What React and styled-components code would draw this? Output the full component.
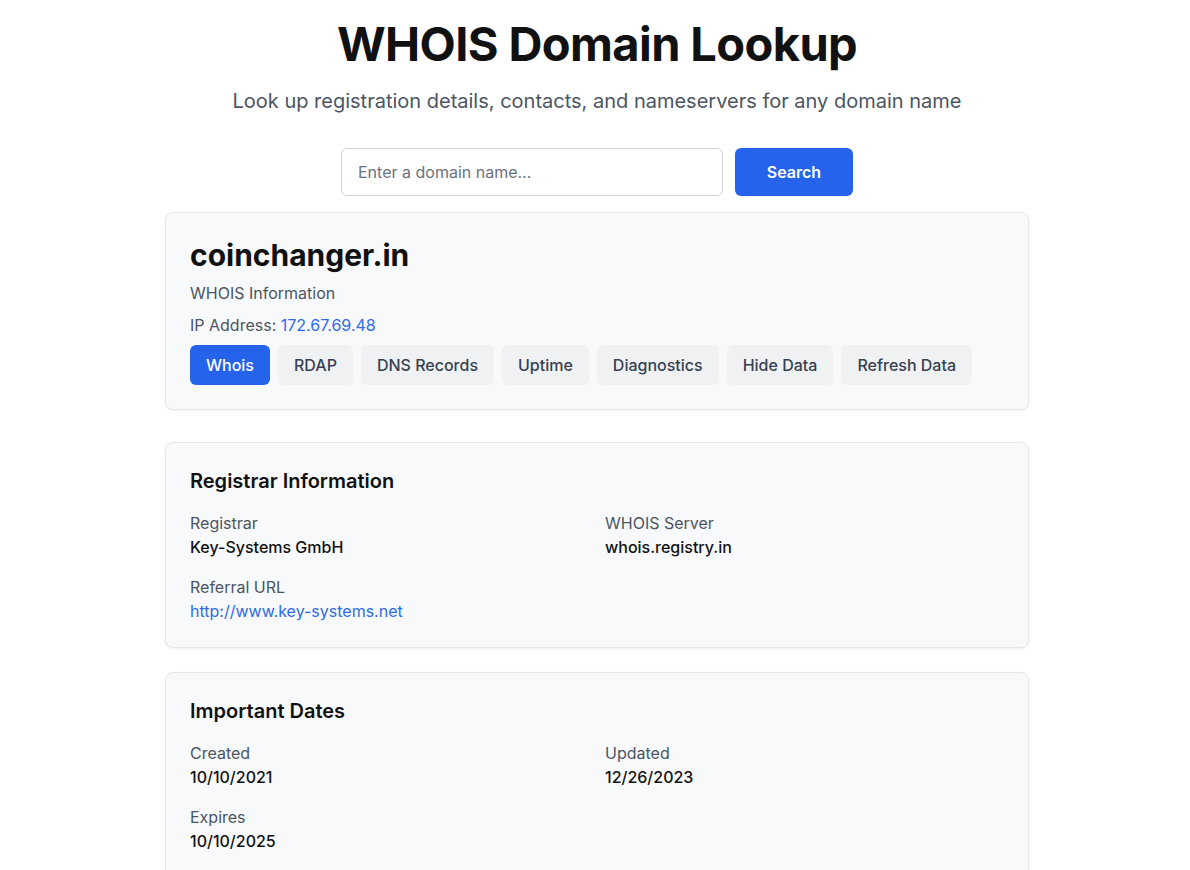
import React from 'react';
import styled, { createGlobalStyle } from 'styled-components';

const GlobalStyle = createGlobalStyle`
  body {
    margin: 0;
    background: #ffffff;
    font-family: Inter, 'Noto Sans', sans-serif;
    color: #111827;
  }
`;

const Page = styled.div`
  padding: 15px 0 40px 4px;
`;

const Container = styled.div`
  max-width: 864px;
  margin: 0 auto;
`;

const Title = styled.h1`
  margin: 0;
  font-size: 47px;
  line-height: 58px;
  font-weight: 700;
  text-align: center;
  color: #111111;
  letter-spacing: -0.6px;
`;

const Subtitle = styled.p`
  margin: 14px 0 0;
  font-size: 20px;
  line-height: 28px;
  text-align: center;
  color: #4b5563;
`;

const SearchForm = styled.form`
  display: flex;
  justify-content: center;
  gap: 12px;
  margin: 33px 0 16px;
`;

const Input = styled.input`
  width: 382px;
  height: 48px;
  box-sizing: border-box;
  padding: 0 16px;
  border: 1px solid #d1d5db;
  border-radius: 6px;
  font-family: inherit;
  font-size: 16px;
  color: #111827;
  background: #fff;
  &::placeholder {
    color: #6b7280;
  }
`;

const SearchButton = styled.button`
  width: 118px;
  height: 48px;
  border: none;
  border-radius: 6px;
  background: #2563eb;
  color: #fff;
  font-family: inherit;
  font-size: 16px;
  font-weight: 600;
`;

const Card = styled.section`
  background: #f8f9fb;
  border: 1px solid #e5e7eb;
  border-radius: 8px;
  box-shadow: 0 1px 3px rgba(0, 0, 0, 0.06);
  padding: 24px;
  margin-bottom: ${(p) => p.$gap || 24}px;
`;

const Domain = styled.h2`
  margin: 0;
  font-size: 30px;
  line-height: 36px;
  font-weight: 700;
  color: #111111;
`;

const Meta = styled.p`
  margin: 8px 0 0;
  font-size: 16px;
  line-height: 24px;
  color: #4b5563;
`;

const Link = styled.a`
  color: #2f6be6;
  text-decoration: none;
  line-height: 24px;
`;

const UrlValue = styled(Link)`
  display: block;
  font-size: 16px;
`;

const Tabs = styled.div`
  display: flex;
  flex-wrap: wrap;
  gap: 8px;
  margin-top: 8px;
`;

const Tab = styled.button`
  height: 40px;
  padding: 0 16px;
  border: none;
  border-radius: 6px;
  font-family: inherit;
  font-size: 16px;
  font-weight: 500;
  background: ${(p) => (p.$active ? '#2563eb' : '#f0f1f3')};
  color: ${(p) => (p.$active ? '#ffffff' : '#374151')};
`;

const SectionTitle = styled.h3`
  margin: 0 0 16px;
  font-size: 20px;
  line-height: 28px;
  font-weight: 600;
  color: #111111;
`;

const Grid = styled.div`
  display: grid;
  grid-template-columns: 1fr 1fr;
  column-gap: 16px;
  row-gap: 16px;
`;

const Field = styled.div`
  display: flex;
  flex-direction: column;
`;

const Label = styled.span`
  font-size: 16px;
  line-height: 24px;
  color: #4b5563;
`;

const Value = styled.span`
  font-size: 16px;
  line-height: 24px;
  font-weight: 500;
  color: #111111;
`;

const tabs = ['Whois', 'RDAP', 'DNS Records', 'Uptime', 'Diagnostics', 'Hide Data', 'Refresh Data'];

const registrar = [
  { label: 'Registrar', value: 'Key-Systems GmbH' },
  { label: 'WHOIS Server', value: 'whois.registry.in' },
  { label: 'Referral URL', value: 'http://www.key-systems.net', link: true },
];

const dates = [
  { label: 'Created', value: '10/10/2021' },
  { label: 'Updated', value: '12/26/2023' },
  { label: 'Expires', value: '10/10/2025' },
];

const Section = ({ title, fields }) => (
  <Card>
    <SectionTitle>{title}</SectionTitle>
    <Grid>
      {fields.map((f) => (
        <Field key={f.label}>
          <Label>{f.label}</Label>
          {f.link ? <UrlValue href={f.value}>{f.value}</UrlValue> : <Value>{f.value}</Value>}
        </Field>
      ))}
    </Grid>
  </Card>
);

const App = () => {
  return (
    <Page>
      <GlobalStyle />
      <Container>
        <Title>WHOIS Domain Lookup</Title>
        <Subtitle>Look up registration details, contacts, and nameservers for any domain name</Subtitle>
        <SearchForm onSubmit={(e) => e.preventDefault()}>
          <Input placeholder="Enter a domain name..." />
          <SearchButton type="submit">Search</SearchButton>
        </SearchForm>
        <Card $gap={32}>
          <Domain>coinchanger.in</Domain>
          <Meta>WHOIS Information</Meta>
          <Meta>
            IP Address: <Link href="#">172.67.69.48</Link>
          </Meta>
          <Tabs>
            {tabs.map((t) => (
              <Tab key={t} $active={t === 'Whois'}>{t}</Tab>
            ))}
          </Tabs>
        </Card>
        <Section title="Registrar Information" fields={registrar} />
        <Section title="Important Dates" fields={dates} />
      </Container>
    </Page>
  );
};

export default App;
